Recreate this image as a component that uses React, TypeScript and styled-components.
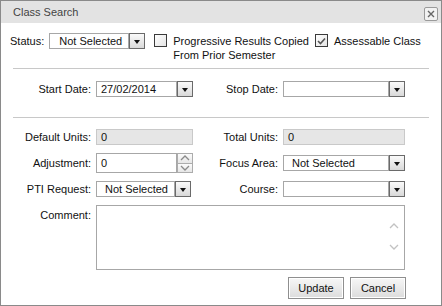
import styled, { createGlobalStyle } from 'styled-components'

const GlobalStyle = createGlobalStyle`
  html, body {
    margin: 0;
    padding: 0;
    background: #ffffff;
  }
  body {
    font-family: "Liberation Sans", Arial, sans-serif;
    font-size: 11px;
    color: #111111;
  }
`

const Dialog = styled.div`
  width: 442px;
  height: 306px;
  box-sizing: border-box;
  border: 1px solid #8a8a8a;
  background: #ffffff;
  display: flex;
  flex-direction: column;
`

const Header = styled.div`
  height: 22px;
  flex-shrink: 0;
  background: #e3e3e3;
  display: flex;
  align-items: center;
  justify-content: space-between;
  padding: 0 3px 0 12px;
  box-sizing: border-box;
`

const HeaderTitle = styled.div`
  color: #444444;
  font-size: 11px;
`

const CloseButton = styled.div`
  width: 14px;
  height: 14px;
  box-sizing: border-box;
  border: 1px solid #9a9a9a;
  border-radius: 2px;
  background: #f2f2f2;
  display: flex;
  align-items: center;
  justify-content: center;
  margin-top: 3px;
`

const StatusRow = styled.div`
  height: 45px;
  box-sizing: border-box;
  padding: 10px 0 0 9px;
  display: flex;
  align-items: flex-start;
`

const InlineLabel = styled.span`
  line-height: 16px;
  margin-right: 5px;
`

const CheckGroup = styled.div`
  display: flex;
  align-items: flex-start;
  margin-left: ${p => p.$offset}px;
`

const CheckText = styled.span`
  line-height: 14px;
  margin-left: 6px;
  margin-top: 1px;
`

const Box = styled.span`
  width: 13px;
  height: 13px;
  box-sizing: border-box;
  border: 1px solid #3a3a3a;
  background: linear-gradient(135deg, #ffffff 0%, #e4e4e4 100%);
  display: flex;
  align-items: center;
  justify-content: center;
  margin-top: 1px;
  flex-shrink: 0;
`

const Divider = styled.div`
  height: 1px;
  background: #c8c8c8;
  margin: 0 12px;
  flex-shrink: 0;
`

const FormGrid = styled.div`
  display: grid;
  grid-template-columns: 90px 97px 80px 122px;
  column-gap: 5px;
  row-gap: 8px;
  align-items: center;
  padding-top: ${p => p.$top}px;
  height: ${p => p.$height}px;
  box-sizing: border-box;
  align-content: start;
`

const FieldLabel = styled.div`
  text-align: right;
  white-space: nowrap;
  align-self: ${p => (p.$top ? 'start' : 'center')};
  padding-top: ${p => (p.$top ? 4 : 0)}px;
`

const SelectWrap = styled.div`
  display: flex;
  width: ${p => (p.$width ? `${p.$width}px` : '100%')};
  height: 16px;
`

const SelectBox = styled.div`
  flex: 1;
  box-sizing: border-box;
  border: 1px solid #a7a7a7;
  background: #ffffff;
  padding-left: ${p => p.$pad}px;
  line-height: 14px;
  white-space: nowrap;
  overflow: hidden;
`

const DropButton = styled.div`
  width: 16px;
  height: 16px;
  box-sizing: border-box;
  border: 1px solid #6a6a6a;
  background: linear-gradient(#fafafa, #d9d9d9);
  display: flex;
  align-items: center;
  justify-content: center;
  flex-shrink: 0;
`

const Arrow = styled.span`
  width: 0;
  height: 0;
  border-left: 3.5px solid transparent;
  border-right: 3.5px solid transparent;
  border-top: 4px solid #111111;
  margin-top: 1px;
`

const ReadOnlyField = styled.div`
  height: 16px;
  box-sizing: border-box;
  border: 1px solid #c9c9c9;
  background: #e6e6e6;
  padding-left: 4px;
  line-height: 14px;
`

const SpinWrap = styled.div`
  display: flex;
  height: 20px;
`

const SpinInput = styled.div`
  width: 81px;
  box-sizing: border-box;
  border: 1px solid #a7a7a7;
  padding-left: 4px;
  line-height: 18px;
`

const SpinButtons = styled.div`
  width: 16px;
  display: flex;
  flex-direction: column;
`

const SpinHalf = styled.div`
  flex: 1;
  box-sizing: border-box;
  border: 1px solid #acacac;
  border-top-width: ${p => (p.$down ? 0 : 1)}px;
  background: linear-gradient(#fbfbfb, #e6e6e6);
  display: flex;
  align-items: center;
  justify-content: center;
`

const TextArea = styled.div`
  grid-column: 2 / 5;
  height: 65px;
  box-sizing: border-box;
  border: 1px solid #a7a7a7;
  position: relative;
`

const ScrollArrows = styled.div`
  position: absolute;
  right: 5px;
  top: 17px;
  display: flex;
  flex-direction: column;
  gap: 15px;
`

const Actions = styled.div`
  display: flex;
  justify-content: flex-end;
  gap: 6px;
  padding: 7px 35px 0 0;
`

const ActionButton = styled.div`
  width: 56px;
  height: 22px;
  box-sizing: border-box;
  border: 1px solid #8f8f8f;
  background: linear-gradient(#f7f7f7, #dcdcdc);
  box-shadow: inset 0 0 0 1px #ffffff;
  display: flex;
  align-items: center;
  justify-content: center;
  color: #111111;
`

function Select ({ value, width, pad = 8 }: { value?: string, width?: number, pad?: number }) {
  return (
    <SelectWrap $width={width}>
      <SelectBox $pad={pad}>{value}</SelectBox>
      <DropButton><Arrow /></DropButton>
    </SelectWrap>
  )
}

function Chevron ({ down, color, size }: { down?: boolean, color: string, size: number }) {
  const h = size / 2 + 1
  return (
    <svg width={size + 2} height={h + 1} viewBox={`0 0 ${size + 2} ${h + 1}`}>
      <polyline
        points={down
          ? `1,1 ${size / 2 + 1},${h} ${size + 1},1`
          : `1,${h} ${size / 2 + 1},1 ${size + 1},${h}`}
        fill='none'
        stroke={color}
        strokeWidth='1.3'
      />
    </svg>
  )
}

export default function App () {
  return (
    <>
      <GlobalStyle />
      <Dialog>
        <Header>
          <HeaderTitle>Class Search</HeaderTitle>
          <CloseButton>
            <svg width='8' height='8' viewBox='0 0 8 8'>
              <path d='M1 1 L7 7 M7 1 L1 7' stroke='#666' strokeWidth='1.4' />
            </svg>
          </CloseButton>
        </Header>

        <StatusRow>
          <InlineLabel>Status:</InlineLabel>
          <Select value='Not Selected' width={96} pad={9} />
          <CheckGroup $offset={9}>
            <Box />
            <CheckText>Progressive Results Copied<br />From Prior Semester</CheckText>
          </CheckGroup>
          <CheckGroup $offset={6}>
            <Box>
              <svg width='9' height='8' viewBox='0 0 9 8'>
                <path d='M1 4 L3.5 6.5 L8 1.5' fill='none' stroke='#555' strokeWidth='1.6' />
              </svg>
            </Box>
            <CheckText>Assessable Class</CheckText>
          </CheckGroup>
        </StatusRow>

        <Divider />

        <FormGrid $top={12} $height={48}>
          <FieldLabel>Start Date:</FieldLabel>
          <Select value='27/02/2014' pad={4} />
          <FieldLabel>Stop Date:</FieldLabel>
          <Select />
        </FormGrid>

        <Divider />

        <FormGrid $top={11}>
          <FieldLabel>Default Units:</FieldLabel>
          <ReadOnlyField>0</ReadOnlyField>
          <FieldLabel>Total Units:</FieldLabel>
          <ReadOnlyField>0</ReadOnlyField>

          <FieldLabel>Adjustment:</FieldLabel>
          <SpinWrap>
            <SpinInput>0</SpinInput>
            <SpinButtons>
              <SpinHalf><Chevron color='#8a8a8a' size={8} /></SpinHalf>
              <SpinHalf $down><Chevron down color='#8a8a8a' size={8} /></SpinHalf>
            </SpinButtons>
          </SpinWrap>
          <FieldLabel>Focus Area:</FieldLabel>
          <Select value='Not Selected' />

          <FieldLabel>PTI Request:</FieldLabel>
          <Select value='Not Selected' width={95} />
          <FieldLabel>Course:</FieldLabel>
          <Select />

          <FieldLabel $top>Comment:</FieldLabel>
          <TextArea>
            <ScrollArrows>
              <Chevron color='#c2c2c2' size={8} />
              <Chevron down color='#c2c2c2' size={8} />
            </ScrollArrows>
          </TextArea>
        </FormGrid>

        <Actions>
          <ActionButton>Update</ActionButton>
          <ActionButton>Cancel</ActionButton>
        </Actions>
      </Dialog>
    </>
  )
}
